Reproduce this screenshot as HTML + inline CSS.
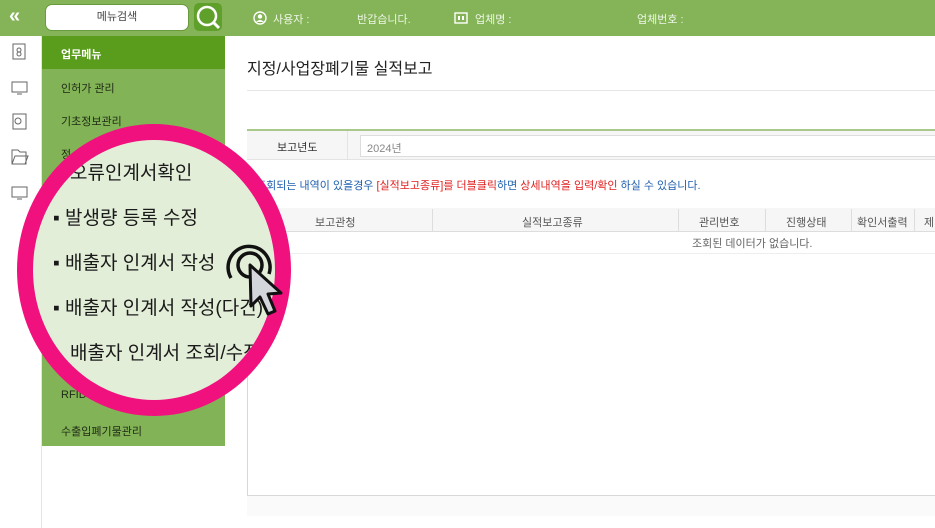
<!DOCTYPE html>
<html><head><meta charset="utf-8"><style>
*{margin:0;padding:0;box-sizing:border-box}
body{width:935px;height:528px;overflow:hidden;background:#fff;font-family:"Liberation Sans","Noto Sans CJK KR",sans-serif;position:relative;font-size:11px;color:#333}
.abs{position:absolute}
.hdr{left:0;top:0;width:935px;height:36px;background:#84b457}
.w{color:#eef6e6;font-size:11px}
.menu{left:42px;top:36px;width:183px;height:410px;background:#82b356}
.mi{position:absolute;left:19px;font-size:11px;color:#1f2a14}
.icons{left:0;top:36px;width:42px;height:492px;background:#fff;border-right:1px solid #e4e4e4}
</style></head><body>
<div class="abs hdr"></div>
<div class="abs" style="left:9px;top:5px;color:#fff;font-size:20px;font-weight:bold">«</div>
<div class="abs" style="left:45px;top:4px;width:144px;height:27px;background:#fff;border-radius:7px;border:1px solid #6a9a3e;text-align:center;line-height:25px;font-size:11px;color:#444">메뉴검색</div>
<div class="abs" style="left:194px;top:3px;width:28px;height:28px;background:#5fa02a;border-radius:5px"></div>
<svg class="abs" style="left:194px;top:3px" width="28" height="28"><circle cx="13" cy="13" r="9" fill="none" stroke="#fff" stroke-width="2.5"/><line x1="20" y1="20" x2="25" y2="25" stroke="#fff" stroke-width="3"/></svg>
<svg class="abs" style="left:253px;top:11px" width="14" height="14"><circle cx="7" cy="7" r="6" fill="none" stroke="#fff" stroke-width="1.4"/><circle cx="7" cy="5.5" r="2.2" fill="#fff"/><path d="M3 11 Q7 7 11 11" fill="#fff"/></svg>
<div class="abs w" style="left:273px;top:11px">사용자 :</div>
<div class="abs w" style="left:357px;top:11px">반갑습니다.</div>
<svg class="abs" style="left:454px;top:12px" width="14" height="12"><rect x="1" y="1" width="12" height="10" fill="none" stroke="#fff" stroke-width="1.4"/><rect x="4" y="4" width="2" height="4" fill="#fff"/><rect x="8" y="4" width="2" height="4" fill="#fff"/></svg>
<div class="abs w" style="left:475px;top:11px">업체명 :</div>
<div class="abs w" style="left:637px;top:11px">업체번호 :</div>

<div class="abs icons"></div>
<svg class="abs" style="left:10px;top:42px" width="20" height="170" fill="none" stroke="#666" stroke-width="1">
<rect x="3" y="2" width="12" height="15"/><circle cx="9" cy="8" r="2"/><circle cx="9" cy="12" r="2"/>
<rect x="2" y="40" width="15" height="10"/><line x1="7" y1="52" x2="12" y2="52"/>
<rect x="3" y="72" width="13" height="15"/><circle cx="8" cy="79" r="3"/>
<path d="M2 122 V108 H8 L10 110 H16 V122 Z M2 122 L5 114 H18 L15 122"/>
<rect x="2" y="145" width="15" height="10"/><line x1="7" y1="157" x2="12" y2="157"/>
</svg>

<div class="abs menu">
<div style="position:absolute;left:0;top:0;width:183px;height:33px;background:#5a9d1d"></div>
<div class="mi" style="top:10px;color:#fff;font-weight:bold">업무메뉴</div>
<div class="mi" style="top:44px">인허가 관리</div>
<div class="mi" style="top:77px">기초정보관리</div>
<div class="mi" style="top:110px">정</div>
<div class="mi" style="top:350px">RFID기반 의료폐기물관리</div>
<div class="mi" style="top:387px">수출입폐기물관리</div>
</div>

<div class="abs" style="left:247px;top:55px;font-size:16px;color:#222">지정/사업장폐기물 실적보고</div>
<div class="abs" style="left:247px;top:90px;width:688px;height:1px;background:#e6e6e6"></div>
<div class="abs" style="left:247px;top:129px;width:688px;height:2px;background:#a9c98a"></div>
<div class="abs" style="left:247px;top:131px;width:688px;height:29px;background:#f6f6f6;border-bottom:1px solid #e3e3e3"></div>
<div class="abs" style="left:277px;top:139px;font-size:11px;color:#333">보고년도</div>
<div class="abs" style="left:347px;top:131px;width:1px;height:29px;background:#e3e3e3"></div>
<div class="abs" style="left:360px;top:135px;width:580px;height:22px;background:#fff;border:1px solid #ddd;padding:4px 6px;color:#888;font-size:11px">2024년</div>
<div class="abs" style="left:256px;top:177px;font-size:11px;color:#1f5fae;white-space:nowrap">조회되는 내역이 있을경우 <span style="color:#e02020">[실적보고종류]를 더블클릭</span>하면 <span style="color:#e02020">상세내역을 입력/확인</span> 하실 수 있습니다.</div>

<div class="abs" style="left:247px;top:208px;width:690px;height:308px;border:1px solid #d8d8d8"></div>
<div class="abs" style="left:247px;top:208px;width:690px;height:24px;background:#f6f6f6;border-bottom:1px solid #ddd"></div>
<div class="abs" style="left:432px;top:209px;width:1px;height:23px;background:#ddd"></div>
<div class="abs" style="left:678px;top:209px;width:1px;height:23px;background:#ddd"></div>
<div class="abs" style="left:765px;top:209px;width:1px;height:23px;background:#ddd"></div>
<div class="abs" style="left:851px;top:209px;width:1px;height:23px;background:#ddd"></div>
<div class="abs" style="left:914px;top:209px;width:1px;height:23px;background:#ddd"></div>
<div class="abs" style="left:315px;top:214px;color:#555">보고관청</div>
<div class="abs" style="left:522px;top:214px;color:#555">실적보고종류</div>
<div class="abs" style="left:699px;top:214px;color:#555">관리번호</div>
<div class="abs" style="left:786px;top:214px;color:#555">진행상태</div>
<div class="abs" style="left:857px;top:214px;color:#555">확인서출력</div>
<div class="abs" style="left:924px;top:214px;color:#555">제</div>
<div class="abs" style="left:692px;top:235px;color:#666">조회된 데이터가 없습니다.</div>
<div class="abs" style="left:247px;top:253px;width:690px;height:1px;background:#eee"></div>
<div class="abs" style="left:247px;top:495px;width:690px;height:21px;background:#fafafa;border-top:1px solid #d8d8d8"></div>

<div class="abs" style="left:17px;top:124px;width:274px;height:292px;border-radius:50%;border:16px solid #f0117f;background:#e3eed8;overflow:hidden">
<div style="position:absolute;left:20px;top:22px;font-size:19px;color:#1a1a1a;white-space:nowrap;line-height:23px">
<div style="margin-left:17px">오류인계서확인</div>
<div style="margin-top:22px">▪ 발생량 등록 수정</div>
<div style="margin-top:22px">▪ 배출자 인계서 작성</div>
<div style="margin-top:22px">▪ 배출자 인계서 작성(다건)</div>
<div style="margin-top:22px;margin-left:17px">배출자 인계서 조회/수정</div>
</div>
</div>
<svg class="abs" style="left:220px;top:234px" width="70" height="90">
<path d="M11 44 A21 21 0 1 1 49 40" fill="none" stroke="#111" stroke-width="3.5"/>
<circle cx="30" cy="31" r="12" fill="none" stroke="#111" stroke-width="3.5"/>
<path d="M30 31 L31 72 L40 63 L48 80 L55 77 L48 60 L61 59 Z" fill="#d3d7dc" stroke="#111" stroke-width="3" stroke-linejoin="round"/>
</svg>
</body></html>
